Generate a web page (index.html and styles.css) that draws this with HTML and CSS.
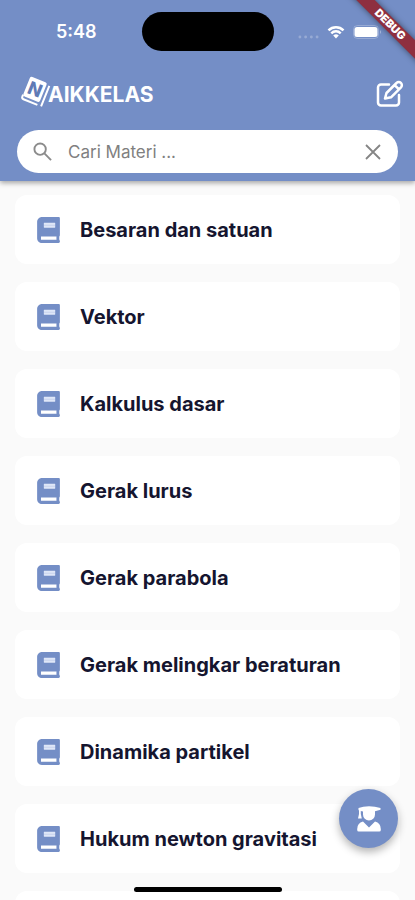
FILE: index.html
```html
<!DOCTYPE html>
<html lang="id">
<head>
<meta charset="utf-8">
<meta name="viewport" content="width=device-width, initial-scale=1">
<title>Naikkelas</title>
<link rel="stylesheet" href="styles.css">
</head>
<body>
<svg class="defs" aria-hidden="true">
  <symbol id="book" viewBox="0 0 448 512">
    <path d="M448 360V24c0-13.300-10.700-24-24-24H96C43 0 0 43 0 96v320c0 53 43 96 96 96h328c13.300 0 24-10.700 24-24v-16c0-7.500-3.500-14.300-8.900-18.700-4.200-15.400-4.200-59.300 0-74.700 5.400-4.300 8.900-11.100 8.900-18.600zM381.400 448H76V384h305.400c-1.900 17.100-1.900 46.900 0 64z"/>
    <rect class="book-label" x="132" y="112" width="224" height="100" rx="8"/>
    <path d="M132 154h224v14H132z" opacity=".3"/>
  </symbol>
</svg>
<div class="app">
  <header class="header">
    <div class="status">
      <time class="clock">5:48</time>
      <div class="island"></div>
      <div class="signals">
        <svg class="cell" viewBox="0 0 22 4"><circle cx="2" cy="2" r="1.500"/><circle cx="8" cy="2" r="1.500"/><circle cx="14" cy="2" r="1.500"/><circle cx="20" cy="2" r="1.500"/></svg>
        <svg class="wifi" viewBox="0 0 18 14"><path d="M1.500 5.300a10.700 10.700 0 0 1 15 0M4.300 8.300a6.700 6.700 0 0 1 9.400 0" fill="none" stroke="#fff" stroke-width="2.500"/><path d="M9 13.500 6.200 10.600a4 4 0 0 1 5.600 0z" fill="#fff"/></svg>
        <svg class="battery" viewBox="0 0 29 14"><rect x=".5" y=".5" width="25" height="13" rx="4" fill="none" stroke="#fff" opacity=".25"/><rect x="1.500" y="2" width="23" height="10" rx="2.500" fill="#fff"/><path d="M27 5v4q2-2 0-4z" fill="#fff" opacity=".4"/></svg>
      </div>
    </div>
    <div class="titlebar">
      <h1 class="brand">
        <svg class="logo" viewBox="0 0 27 31" aria-label="N" role="img">
          <g transform="rotate(22 13 15)">
            <rect x="3" y="2" width="18" height="21" rx="2" fill="#fff"/>
            <path d="M3 22v2q0 2 2 2h15M24 4v22" fill="none" stroke="#fff" stroke-width="2"/>
            <text class="logo-letter" x="12" y="19" text-anchor="middle">N</text>
          </g>
        </svg><span>AIKKELAS</span>
      </h1>
      <button class="icon-button" type="button" aria-label="Tulis">
        <svg class="edit" viewBox="0 0 28 28" fill="none" stroke="#fff" stroke-width="2.500" stroke-linecap="round" stroke-linejoin="round"><path d="M13 4.500H5A3 3 0 0 0 2 7.500V22.500A3 3 0 0 0 5 25.500H20A3 3 0 0 0 23 22.500V15"/><path d="M9 18.500 10.500 13 20.500 3A3 3 0 0 1 25 7.300L15 17.300ZM18.500 5 23 9.300"/></svg>
      </button>
    </div>
    <form class="search">
      <svg class="lens" viewBox="0 0 20 20" fill="none" stroke="#8b8b8b" stroke-width="2"><circle cx="7.500" cy="7.500" r="6"/><path d="m12 12 7 7"/></svg>
      <input class="search-input" type="text" aria-label="Cari Materi" placeholder="Cari Materi ...">
      <button class="icon-button" type="reset" aria-label="Hapus">
        <svg class="close" viewBox="0 0 16 16" stroke="#858585" stroke-width="1.800"><path d="m1 1 14 14M15 1 1 15"/></svg>
      </button>
    </form>
    <div class="debug"><span>DEBUG</span></div>
  </header>
  <main class="content">
    <ul class="list">
      <li><a class="card" href="#"><svg class="book"><use href="#book"/></svg>Besaran dan satuan</a></li>
      <li><a class="card" href="#"><svg class="book"><use href="#book"/></svg>Vektor</a></li>
      <li><a class="card" href="#"><svg class="book"><use href="#book"/></svg>Kalkulus dasar</a></li>
      <li><a class="card" href="#"><svg class="book"><use href="#book"/></svg>Gerak lurus</a></li>
      <li><a class="card" href="#"><svg class="book"><use href="#book"/></svg>Gerak parabola</a></li>
      <li><a class="card" href="#"><svg class="book"><use href="#book"/></svg>Gerak melingkar beraturan</a></li>
      <li><a class="card" href="#"><svg class="book"><use href="#book"/></svg>Dinamika partikel</a></li>
      <li><a class="card" href="#"><svg class="book"><use href="#book"/></svg>Hukum newton gravitasi</a></li>
      <li><div class="card"></div></li>
    </ul>
  </main>
  <button class="fab" type="button" aria-label="Profil siswa">
    <svg class="graduate" viewBox="0 0 24 28" fill="#fff"><path d="M1.500 3Q6 1.200 12 1.200T23.500 3v1.800L18 6.200v3.300a6 6 0 0 1-12 0V6.500L3.800 6v3l1 4.500H1l1-4.500V5.500L1.500 5Z"/><path d="M6 16.500 12 22.500l6-6Q23.800 18 23.800 24v1q0 1.500-1.500 1.500H1.700Q.2 26.500.2 25v-1Q.2 18 6 16.500Z"/></svg>
  </button>
  <div class="home-bar"></div>
</div>
</body>
</html>
```
FILE: styles.css
```css
* {
  box-sizing: border-box;
}

body {
  margin: 0;
  font-family: Inter, "Liberation Sans", sans-serif;
  background: #fafafa;
  color: #15152f;
}

.defs {
  position: absolute;
  width: 0;
  height: 0;
}

.app {
  position: relative;
  display: flex;
  flex-direction: column;
  height: 100vh;
  overflow: hidden;
}

.header {
  position: relative;
  z-index: 1;
  flex: none;
  padding: 12px 17px 8px;
  background: #748ec6;
  box-shadow: 0 2px 5px rgba(0, 0, 0, 0.35);
  overflow: clip;
  overflow-clip-margin: 8px;
}

.status {
  display: grid;
  grid-template-columns: 1fr 132px 1fr;
  align-items: center;
}

.clock {
  padding-right: 6px;
  text-align: center;
  font-size: 18px;
  font-weight: 600;
  color: #fff;
}

.island {
  height: 39px;
  border-radius: 20px;
  background: #000;
}

.signals {
  display: flex;
  align-items: center;
  gap: 8px;
  padding-left: 24px;
}

.cell {
  flex: none;
  width: 21px;
  height: 4px;
  margin-top: 10px;
  fill: #fff;
  opacity: 0.25;
}

.wifi {
  flex: none;
  width: 18px;
  height: 14px;
}

.battery {
  flex: none;
  width: 29px;
  height: 14px;
}

.titlebar {
  display: flex;
  align-items: center;
  justify-content: space-between;
  height: 79px;
  padding: 7px 0 0 5px;
}

.brand {
  display: flex;
  align-items: center;
  margin: 0;
  font-size: 21px;
  font-weight: 700;
  color: #fff;
}

.logo {
  width: 27px;
  height: 31px;
  margin-right: -1px;
  margin-bottom: 4px;
  overflow: visible;
}

.logo-letter {
  font-size: 18px;
  font-weight: 800;
  fill: #5f7ab5;
}

.icon-button {
  display: flex;
  align-items: center;
  justify-content: center;
  padding: 0;
  border: 0;
  background: none;
}

.edit {
  width: 28px;
  height: 28px;
  margin-right: -6px;
}

.search {
  display: flex;
  align-items: center;
  gap: 16px;
  height: 43px;
  padding: 0 17px 0 16px;
  border-radius: 22px;
  background: #fff;
}

.lens {
  flex: none;
  width: 19px;
  height: 19px;
}

.search-input {
  flex: 1;
  min-width: 0;
  padding: 0;
  border: 0;
  outline: 0;
  background: none;
  font-family: inherit;
  font-size: 17px;
}

.search-input::placeholder {
  color: #808080;
}

.close {
  width: 16px;
  height: 16px;
}

.debug {
  position: absolute;
  top: 18px;
  right: -39px;
  width: 128px;
  background: #8e2f40;
  color: #fff;
  font-size: 11px;
  font-weight: 900;
  line-height: 13px;
  text-align: center;
  box-shadow: 0 0 6px rgba(0, 0, 0, 0.5);
  transform: rotate(45deg);
}

.content {
  flex: 1;
  min-height: 0;
  padding: 14px 15px 0;
  overflow: hidden;
}

.list {
  display: grid;
  gap: 18px;
  margin: 0;
  padding: 0;
  list-style: none;
}

.card {
  display: flex;
  align-items: center;
  gap: 20px;
  height: 69px;
  padding: 0 22px;
  border-radius: 12px;
  background: #fff;
  color: inherit;
  font-size: 20px;
  font-weight: 700;
  text-decoration: none;
}

.book {
  flex: none;
  width: 23px;
  height: 26px;
  fill: #748ec6;
}

.book-label {
  fill: #dfe7f8;
}

.fab {
  position: absolute;
  right: 17px;
  bottom: 52px;
  z-index: 2;
  display: flex;
  align-items: center;
  justify-content: center;
  width: 59px;
  height: 59px;
  padding: 0;
  border: 0;
  border-radius: 50%;
  background: #748ec6;
  box-shadow: 0 4px 8px rgba(0, 0, 0, 0.3);
}

.graduate {
  width: 24px;
  height: 28px;
}

.home-bar {
  position: absolute;
  bottom: 8px;
  left: 50%;
  z-index: 2;
  width: 148px;
  height: 5px;
  border-radius: 3px;
  background: #000;
  transform: translateX(-50%);
}
```
